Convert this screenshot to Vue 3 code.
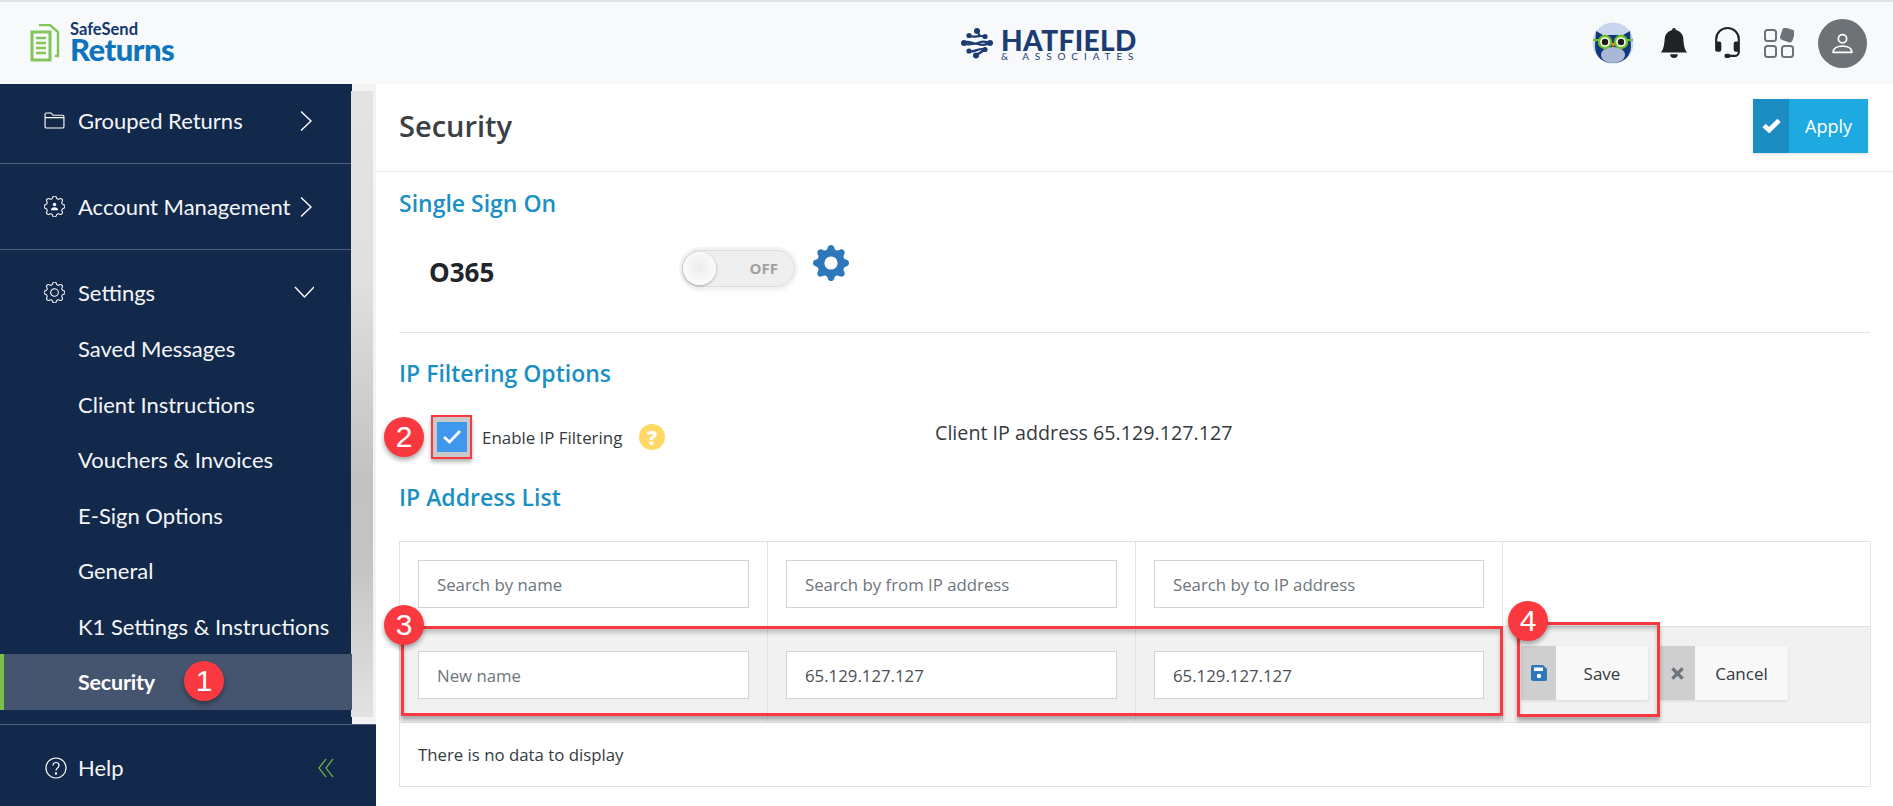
<template>
  <div class="page">
    <header class="topbar">
      <div class="brand">
        <svg class="brand-icon" viewBox="0 0 30 38" width="30" height="38">
          <path d="M9 1h11l8 7v24h-3" fill="none" stroke="#82c55b" stroke-width="2.4" />
          <path d="M2 8h18v28H2z" fill="#f8f9fa" stroke="#82c55b" stroke-width="3" />
          <path d="M6 14h10M6 19h10M6 24h10M6 29h10" stroke="#82c55b" stroke-width="2.6" />
        </svg>
        <div class="brand-text">
          <span class="brand-top">SafeSend</span>
          <span class="brand-main">Returns</span>
        </div>
      </div>

      <div class="firm">
        <svg class="firm-mark" viewBox="0 0 32 32" width="32" height="32" fill="#1d3c72">
          <circle cx="16" cy="4" r="3" />
          <circle cx="8" cy="8.5" r="2.6" />
          <circle cx="24" cy="9.5" r="2.6" />
          <circle cx="3" cy="16" r="3" />
          <circle cx="29" cy="16" r="3" />
          <circle cx="8" cy="24" r="2.6" />
          <circle cx="24" cy="22.5" r="2.6" />
          <circle cx="15" cy="28.5" r="3" />
          <path d="M8 8.500c5 3 9-1 16 1M3 16c6-4 9 3 14 0s8-1 12 0M3 16c6 4 9-1 14 1s8 1 12-1M8 24c6 2 10-4 16-1.500M16 4l3 5M15 28.500l9-6" fill="none" stroke="#1d3c72" stroke-width="2.2" />
        </svg>
        <div class="firm-text">
          <span class="firm-name">HATFIELD</span>
          <span class="firm-sub">&amp; ASSOCIATES</span>
        </div>
      </div>

      <div class="top-actions">
        <svg class="owl" viewBox="0 0 42 42" width="42" height="42">
          <circle cx="21" cy="21" r="20.500" fill="#c7d6ee" />
          <path d="M4 9l7 4h20l7-4 1 15c0 11-8 17-18 17S3 35 3 24z" fill="#12387a" />
          <ellipse cx="21" cy="33" rx="12" ry="8" fill="#a9b8d6" />
          <circle cx="13" cy="20" r="6" fill="#fff" stroke="#6fc02e" stroke-width="2.4" />
          <circle cx="29" cy="20" r="6" fill="#fff" stroke="#6fc02e" stroke-width="2.4" />
          <circle cx="13" cy="20" r="3.200" fill="#1b1b1b" />
          <circle cx="29" cy="20" r="3.200" fill="#1b1b1b" />
          <path d="M19 21h4l-2 5z" fill="#e98a2b" />
          <path d="M1 18h6M35 18h6" stroke="#6fc02e" stroke-width="2" />
        </svg>
        <svg class="bell" viewBox="0 0 16 16" width="30" height="32" fill="#1f2327">
          <path d="M8 16a2 2 0 0 0 2-2H6a2 2 0 0 0 2 2zm.995-14.901a1 1 0 1 0-1.990 0A5.002 5.002 0 0 0 3 6c0 1.098-.5 6-2 7h14c-1.500-1-2-5.902-2-7 0-2.420-1.720-4.440-4.005-4.901z" />
        </svg>
        <svg class="headset" viewBox="0 0 16 16" width="33" height="33" fill="#1f2327">
          <path d="M8 1a5 5 0 0 0-5 5v1h1a1 1 0 0 1 1 1v3a1 1 0 0 1-1 1H3a1 1 0 0 1-1-1V6a6 6 0 1 1 12 0v6a2.500 2.500 0 0 1-2.500 2.500H9.366a1 1 0 0 1-.866.5h-1a1 1 0 1 1 0-2h1a1 1 0 0 1 .866.5H11.500A1.500 1.500 0 0 0 13 12h-1a1 1 0 0 1-1-1V8a1 1 0 0 1 1-1h1V6a5 5 0 0 0-5-5z" />
        </svg>
        <svg class="apps" viewBox="0 0 30 30" width="30" height="30" fill="none" stroke="#6c7378" stroke-width="2">
          <rect x="1" y="2" width="11" height="11" rx="2.500" />
          <rect x="1" y="18" width="11" height="11" rx="2.500" />
          <rect x="18" y="18" width="11" height="11" rx="2.500" />
          <rect x="18" y="1.500" width="11" height="11" rx="2" fill="#6c7378" transform="rotate(18 23.500 7)" />
        </svg>
        <span class="avatar">
          <svg viewBox="0 0 24 24" width="25" height="25" fill="none" stroke="#fff" stroke-width="1.600">
            <circle cx="12" cy="7.500" r="4" />
            <path d="M3 20.500c0-4 4-6 9-6s9 2 9 6z" stroke-linejoin="round" />
          </svg>
        </span>
      </div>
    </header>

    <div class="body">
      <aside class="sidebar">
        <div class="side-scroll">
          <nav class="nav">
            <div class="nav-group cut">
              <span class="nav-icon">
                <svg viewBox="0 0 22 18" width="21" height="17" fill="none" stroke="#fff" stroke-width="1.200">
                  <path d="M1 15.500V2.500A1.500 1.500 0 0 1 2.500 1h5l2 2.500h10A1.500 1.500 0 0 1 21 5v10.500a1.500 1.500 0 0 1-1.500 1.500h-17A1.500 1.500 0 0 1 1 15.500zM1 6h20" />
                </svg>
              </span>
              <span class="nav-label">Grouped Returns</span>
              <svg class="chev" viewBox="0 0 12 20" width="12" height="21"><path d="M1 1l10 9.500L1 20" /></svg>
            </div>
            <div class="nav-group">
              <span class="nav-icon">
                <svg viewBox="0 0 16 16" width="21" height="21" fill="none" stroke="#fff" stroke-width=".8">
                  <path :d="gearOutline" />
                  <circle cx="8" cy="6.500" r="1.300" fill="#fff" stroke="none" />
                  <path d="M5.200 10.800c0-3 5.600-3 5.600 0z" fill="#fff" stroke="none" />
                </svg>
              </span>
              <span class="nav-label">Account Management</span>
              <svg class="chev" viewBox="0 0 12 20" width="12" height="21"><path d="M1 1l10 9.500L1 20" /></svg>
            </div>
            <div class="nav-group open">
              <span class="nav-icon">
                <svg viewBox="0 0 16 16" width="21" height="21" fill="none" stroke="#fff" stroke-width=".8">
                  <path :d="gearOutline + gearHole" />
                </svg>
              </span>
              <span class="nav-label">Settings</span>
              <svg class="chev" viewBox="0 0 20 12" width="20" height="12"><path d="M1 1l9.500 10L20 1" /></svg>
            </div>
            <ul class="sub-list">
              <li v-for="item in subItems" :key="item" class="sub-item" :class="{ active: item === 'Security' }">
                <span>{{ item }}</span>
                <span v-if="item === 'Security'" class="badge badge-1">1</span>
              </li>
            </ul>
          </nav>
          <div class="scroll-track"><div class="scroll-thumb"></div></div>
        </div>
        <div class="side-foot">
          <svg viewBox="0 0 22 22" width="22" height="22" fill="none" stroke="#fff" stroke-width="1.200">
            <circle cx="11" cy="11" r="10" />
            <path d="M8 8.500c0-4 6-4 6 0 0 2.500-3 2.500-3 5" />
            <circle cx="11" cy="16.500" r=".6" fill="#fff" />
          </svg>
          <span class="nav-label">Help</span>
          <svg class="collapse" viewBox="0 0 16 20" width="16" height="20" fill="none" stroke="#7cc04b" stroke-width="1.200">
            <path d="M8 1L1 10l7 9M15 1l-7 9 7 9" />
          </svg>
        </div>
      </aside>

      <main class="main">
        <div class="page-head">
          <h1 class="page-title">Security</h1>
          <button class="apply-btn">
            <span class="apply-icon">
              <svg viewBox="0 0 20 16" width="19" height="15" fill="none" stroke="#fff" stroke-width="5">
                <path d="M2 8l5.500 5L18 2.500" />
              </svg>
            </span>
            <span class="apply-text">Apply</span>
          </button>
        </div>

        <div class="content">
          <h2 class="section-title first">Single Sign On</h2>
          <div class="sso-row">
            <span class="sso-name">O365</span>
            <span class="toggle">
              <span class="toggle-knob"></span>
              <span class="toggle-off">OFF</span>
            </span>
            <svg class="sso-gear" viewBox="0 0 16 16" width="36" height="36" fill="#2f77bb">
              <path :d="gearOutline + gearHole" />
            </svg>
          </div>
          <hr class="rule" />

          <h2 class="section-title">IP Filtering Options</h2>
          <div class="filter-row">
            <span class="badge badge-2">2</span>
            <span class="check-wrap">
              <span class="check">
                <svg viewBox="0 0 20 16" width="20" height="16" fill="none" stroke="#fff" stroke-width="2.800">
                  <path d="M2 8l5.500 5L18 2" />
                </svg>
              </span>
            </span>
            <label class="check-label">Enable IP Filtering</label>
            <span class="help-dot">?</span>
            <span class="client-ip">Client IP address 65.129.127.127</span>
          </div>

          <h2 class="section-title list-title">IP Address List</h2>

          <div class="ip-table">
            <div class="ip-row search-row">
              <div v-for="ph in searchFields" :key="ph" class="ip-cell">
                <input class="ip-input" type="text" :placeholder="ph" />
              </div>
              <div class="ip-cell action"></div>
            </div>
            <div class="ip-row edit-row">
              <div class="ip-cell"><input class="ip-input" type="text" placeholder="New name" /></div>
              <div class="ip-cell"><input class="ip-input" type="text" value="65.129.127.127" /></div>
              <div class="ip-cell"><input class="ip-input" type="text" value="65.129.127.127" /></div>
              <div class="ip-cell action">
                <button class="act-btn save">
                  <span class="act-icon">
                    <svg viewBox="0 0 16 16" width="16" height="16">
                      <path d="M2 0h10l4 4v10a2 2 0 0 1-2 2H2a2 2 0 0 1-2-2V2a2 2 0 0 1 2-2z" fill="#2f77bb" />
                      <rect x="3" y="2.500" width="9" height="3.500" fill="#fff" />
                      <circle cx="8" cy="11" r="2.200" fill="#fff" />
                    </svg>
                  </span>
                  <span class="act-text">Save</span>
                </button>
                <button class="act-btn cancel">
                  <span class="act-icon">
                    <svg viewBox="0 0 14 14" width="13" height="13" fill="none" stroke="#6c757d" stroke-width="3.600">
                      <path d="M1.500 1.500l11 11M12.500 1.500l-11 11" />
                    </svg>
                  </span>
                  <span class="act-text">Cancel</span>
                </button>
                <span class="mark mark-save"></span>
                <span class="badge badge-4">4</span>
              </div>
              <span class="mark mark-fields"></span>
              <span class="badge badge-3">3</span>
            </div>
            <div class="empty-row">There is no data to display</div>
          </div>
        </div>
      </main>
    </div>
  </div>
</template>

<script setup>
const subItems = [
  'Saved Messages',
  'Client Instructions',
  'Vouchers & Invoices',
  'E-Sign Options',
  'General',
  'K1 Settings & Instructions',
  'Security'
]

const searchFields = [
  'Search by name',
  'Search by from IP address',
  'Search by to IP address'
]

const gearOutline = 'M9.405 1.050c-.413-1.400-2.397-1.400-2.810 0l-.1.340a1.464 1.464 0 0 1-2.105.872l-.31-.17c-1.283-.698-2.686.705-1.987 1.987l.169.311c.446.820.023 1.841-.872 2.105l-.34.1c-1.400.413-1.400 2.397 0 2.810l.34.1a1.464 1.464 0 0 1 .872 2.105l-.17.310c-.698 1.283.705 2.686 1.987 1.987l.311-.169a1.464 1.464 0 0 1 2.105.872l.1.340c.413 1.400 2.397 1.400 2.810 0l.1-.340a1.464 1.464 0 0 1 2.105-.872l.310.170c1.283.698 2.686-.705 1.987-1.987l-.169-.311a1.464 1.464 0 0 1 .872-2.105l.340-.1c1.400-.413 1.400-2.397 0-2.810l-.340-.1a1.464 1.464 0 0 1-.872-2.105l.170-.310c.698-1.283-.705-2.686-1.987-1.987l-.311.169a1.464 1.464 0 0 1-2.105-.872l-.1-.340z'
const gearHole = 'M8 10.930a2.929 2.929 0 1 1 0-5.860 2.929 2.929 0 0 1 0 5.858z'
</script>

<style>
html,
body {
  margin: 0;
  overflow: hidden;
  background: #fff;
}
</style>

<style scoped>
.page {
  width: 1893px;
  height: 806px;
  display: flex;
  flex-direction: column;
  font-family: "Open Sans", "Noto Sans", sans-serif;
  color: #343a40;
  overflow: hidden;
}

/* top bar */
.topbar {
  height: 84px;
  box-sizing: border-box;
  border-top: 2px solid #dfe2e6;
  background: #f8f9fa;
  display: flex;
  align-items: center;
  padding: 0 26px 0 30px;
  flex-shrink: 0;
}

.brand {
  display: flex;
  align-items: center;
  gap: 10px;
  width: 931px;
}

.brand-icon {
  flex-shrink: 0;
}

.brand-text {
  display: flex;
  flex-direction: column;
  font-family: Lato, sans-serif;
  line-height: 1;
}

.brand-top {
  font-size: 16.500px;
  font-weight: 700;
  color: #12386f;
}

.brand-main {
  font-size: 31px;
  font-weight: 900;
  color: #0d74bd;
  letter-spacing: -.5px;
  margin-top: -3px;
}

.firm {
  display: flex;
  align-items: center;
  gap: 8px;
}

.firm-text {
  display: flex;
  flex-direction: column;
  font-family: Lato, sans-serif;
  color: #1d3c72;
  line-height: 1;
}

.firm-name {
  font-size: 28px;
  font-weight: 900;
  letter-spacing: .4px;
}

.firm-sub {
  font-size: 10px;
  letter-spacing: 5.900px;
  margin-top: -3px;
}

.top-actions {
  margin-left: auto;
  display: flex;
  align-items: center;
}

.bell {
  margin-left: 25px;
}

.headset {
  margin-left: 22px;
}

.apps {
  margin-left: 20px;
}

.avatar {
  width: 49px;
  height: 49px;
  border-radius: 50%;
  background: #6c7276;
  display: flex;
  align-items: center;
  justify-content: center;
  margin-left: 24px;
}

.body {
  flex: 1;
  display: flex;
  min-height: 0;
}

/* sidebar */
.sidebar {
  width: 376px;
  flex-shrink: 0;
  display: flex;
  flex-direction: column;
  font-family: Lato, sans-serif;
}

.side-scroll {
  height: 640px;
  display: flex;
  flex-shrink: 0;
}

.nav {
  width: 352px;
  background: #13294b;
  color: #f4f6f8;
}

.scroll-track {
  flex: 1;
  background: #f3f3f3;
  padding: 7px 3px 7px 0;
}

.scroll-thumb {
  height: 100%;
  margin-left: -1px;
  background: linear-gradient(#e2e3e4, #e0e0e0 30%, #c2c2c2 62%, #c4c4c4 75%, #e2e2e2);
}

.nav-group {
  height: 86px;
  display: flex;
  align-items: center;
  padding: 0 40px 0 44px;
  box-sizing: border-box;
  border-bottom: 1px solid #4c5f7d;
}

.nav-group.cut {
  height: 80px;
  padding-bottom: 7px;
}

.nav-group.open {
  border-bottom: none;
  height: 71px;
  padding-top: 13px;
  padding-right: 38px;
}

.nav-icon {
  flex-shrink: 0;
  width: 34px;
  display: flex;
}

.nav-label {
  font-size: 22px;
  color: #f4f6f8;
}

.chev {
  margin-left: auto;
  fill: none;
  stroke: #fff;
  stroke-width: 1.400;
}

.sub-list {
  list-style: none;
  margin: 0;
  padding: 0;
}

.sub-item {
  height: 55.500px;
  display: flex;
  align-items: center;
  padding-left: 74px;
  font-size: 22px;
  box-sizing: border-box;
  border-left: 4px solid transparent;
  position: relative;
}

.sub-item.active {
  background: #45556f;
  border-left-color: #7cc04b;
  font-weight: 700;
  font-size: 21.500px;
  letter-spacing: -.2px;
  color: #fff;
}

.side-foot {
  flex: 1;
  background: #13294b;
  border-top: 1px solid #4c5f7d;
  display: flex;
  align-items: center;
  padding: 4px 42px 0 45px;
  gap: 11px;
}

.collapse {
  margin-left: auto;
}

/* main */
.main {
  flex: 1;
  min-width: 0;
  display: flex;
  flex-direction: column;
}

.page-head {
  height: 88px;
  box-sizing: border-box;
  border-bottom: 1px solid #e8e8e8;
  display: flex;
  align-items: center;
  justify-content: space-between;
  padding: 0 25px 4px 23px;
}

.page-title {
  margin: 0;
  font-size: 29px;
  font-weight: 600;
  color: #3b4045;
}

.apply-btn {
  display: flex;
  width: 115px;
  height: 54px;
  padding: 0;
  border: none;
  background: #1fa9e1;
  color: #fff;
  font: 400 18px "Open Sans", sans-serif;
  box-shadow: 0 1px 3px rgba(0, 0, 0, .15);
}

.apply-icon {
  width: 36px;
  height: 100%;
  background: #1b8dc2;
  display: flex;
  align-items: center;
  justify-content: center;
}

.apply-text {
  flex: 1;
  align-self: center;
}

.content {
  padding: 0 23px;
}

.section-title {
  margin: 0;
  font-size: 23px;
  font-weight: 600;
  line-height: 30px;
  color: #1a90c4;
}

.section-title.first {
  margin-top: 16px;
}

.sso-row {
  height: 100px;
  display: flex;
  align-items: center;
  padding-left: 30px;
}

.sso-name {
  font-size: 26px;
  font-weight: 700;
  color: #212529;
  width: 253px;
  position: relative;
  top: 4px;
}

.toggle {
  width: 113px;
  height: 37px;
  box-sizing: border-box;
  border: 1px solid #dcdcdc;
  border-radius: 19px;
  background: #efefef;
  display: flex;
  align-items: center;
  box-shadow: 0 0 0 3px #f3f3f3, 0 3px 4px rgba(0, 0, 0, .08);
}

.toggle-knob {
  width: 33px;
  height: 33px;
  border-radius: 50%;
  background: radial-gradient(circle at 50% 45%, #ececec, #fbfbfb 70%);
  box-shadow: 0 1px 3px rgba(0, 0, 0, .3);
}

.toggle-off {
  margin-left: auto;
  margin-right: 16px;
  font-size: 15px;
  font-weight: 700;
  color: #a1a1a1;
}

.sso-gear {
  margin-left: 18px;
  position: relative;
  top: -5px;
}

.rule {
  border: none;
  border-top: 1px solid #e4e4e4;
  margin: 14px 0 25px;
}

.filter-row {
  height: 44px;
  margin-top: 27px;
  display: flex;
  align-items: center;
  position: relative;
}

.check-wrap {
  position: absolute;
  left: 32px;
  top: 0;
  width: 41px;
  height: 44px;
  box-sizing: border-box;
  border: 2px solid #f9393f;
  background: #c9c9c9;
  box-shadow: 0 3px 4px rgba(0, 0, 0, .3);
  display: flex;
  align-items: center;
  justify-content: center;
}

.check {
  width: 30px;
  height: 30px;
  background: #3f97ee;
  display: flex;
  align-items: center;
  justify-content: center;
}

.check-label {
  margin-left: 83px;
  font-size: 16.900px;
  color: #343a40;
  width: 157px;
  white-space: nowrap;
}

.help-dot {
  width: 26px;
  height: 26px;
  border-radius: 50%;
  background: #ffd866;
  color: #fff;
  font-weight: 800;
  font-size: 20px;
  display: flex;
  align-items: center;
  justify-content: center;
}

.client-ip {
  margin-left: 270px;
  font-size: 19.700px;
  color: #343a40;
  position: relative;
  top: -5px;
}

.list-title {
  margin-top: 23px;
}

.ip-table {
  margin-top: 29px;
  border: 1px solid #e2e2e2;
  width: 1472px;
  box-sizing: border-box;
  font-size: 16px;
}

.ip-row {
  display: grid;
  grid-template-columns: 368px 368px 367px 1fr;
  position: relative;
}

.search-row {
  height: 84px;
}

.edit-row {
  height: 97px;
  box-sizing: border-box;
  background: #f1f1f1;
  border-top: 1px solid #e2e2e2;
  border-bottom: 1px solid #e2e2e2;
}

.ip-cell {
  border-right: 1px solid #e2e2e2;
  padding: 18px 18px 0;
  box-sizing: border-box;
}

.edit-row .ip-cell {
  padding-top: 24px;
}

.ip-input {
  width: 100%;
  height: 48px;
  box-sizing: border-box;
  border: 1px solid #ced4da;
  background: #fff;
  padding: 0 18px;
  font: 400 16.800px "Open Sans", sans-serif;
  color: #495057;
}

.ip-input::placeholder {
  color: #6c757d;
  opacity: 1;
}

.ip-cell.action,
.edit-row .ip-cell.action {
  position: relative;
  display: flex;
  gap: 12px;
  padding: 19px 0 0 18px;
  border-right: none;
}

.act-btn {
  display: flex;
  height: 54px;
  padding: 0;
  border: none;
  background: #f8f8f8;
  color: #343a40;
  font: 400 17px "Open Sans", sans-serif;
  box-shadow: 0 1px 3px rgba(0, 0, 0, .1);
}

.save {
  width: 127px;
}

.cancel {
  width: 128px;
}

.act-icon {
  width: 35px;
  height: 100%;
  background: #cfcfcf;
  display: flex;
  align-items: center;
  justify-content: center;
}

.act-text {
  flex: 1;
  align-self: center;
}

.empty-row {
  height: 63px;
  display: flex;
  align-items: center;
  padding-left: 18px;
  font-size: 16.800px;
  color: #343a40;
}

/* annotations over the screenshot */
.mark {
  position: absolute;
  box-sizing: border-box;
  border: 3px solid #f9393f;
  box-shadow: 0 4px 4px rgba(0, 0, 0, .3), inset 0 4px 4px rgba(0, 0, 0, .2);
  pointer-events: none;
}

.mark-fields {
  left: 1px;
  top: -1px;
  width: 1102px;
  height: 90px;
}

.mark-save {
  left: 14px;
  top: -5px;
  width: 143px;
  height: 95px;
}

.badge {
  position: absolute;
  width: 40px;
  height: 40px;
  border-radius: 50%;
  background: #f9393f;
  color: #fff;
  font: 400 30px "Liberation Sans", sans-serif;
  letter-spacing: 0;
  display: flex;
  align-items: center;
  justify-content: center;
  box-shadow: 0 3px 5px rgba(0, 0, 0, .35);
  z-index: 2;
}

.badge-1 {
  left: 180px;
  top: 7px;
}

.badge-2 {
  left: -15px;
  top: 2px;
}

.badge-3 {
  left: -16px;
  top: -22px;
}

.badge-4 {
  left: 5px;
  top: -26px;
}
</style>
